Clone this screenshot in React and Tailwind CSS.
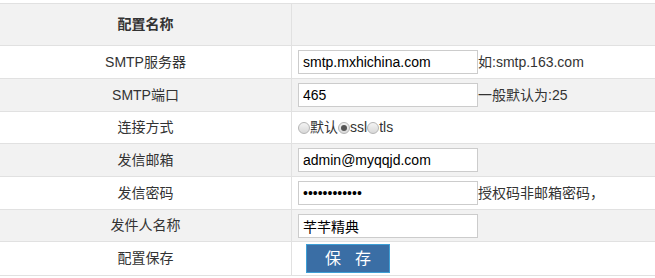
const font = { fontFamily: '"Liberation Sans", "Noto Sans CJK SC", sans-serif' };

function Row({ label, gray, h, children }) {
  return (
    <div className={`flex border-b border-[#e1e1e1] ${h} ${gray ? 'bg-[#f2f2f2]' : 'bg-white'}`}>
      <div className="w-[292px] shrink-0 border-r border-[#e1e1e1] flex items-center justify-center text-[14px] text-[#333]">{label}</div>
      <div className="flex-1 flex items-center pl-[6px] text-[14px] text-[#333]">{children}</div>
    </div>
  );
}

function Field({ value, type = 'text' }) {
  return (
    <input readOnly type={type} value={value}
      className="w-[180px] h-[24px] border border-[#ccc] bg-white px-[4px] text-[14px] text-black outline-none" style={font} />
  );
}

function Radio({ checked }) {
  return (
    <span className="inline-flex w-[12px] h-[12px] rounded-full border border-[#b5b5b5] bg-gradient-to-b from-[#f4f4f4] to-[#d8d8d8] items-center justify-center mt-[1px]">
      {checked && <span className="w-[6px] h-[6px] rounded-full bg-[#555]" />}
    </span>
  );
}

export default function App() {
  return (
    <div className="w-[655px] h-[278px] bg-white pt-[3px]" style={font}>
      <div className="border-t border-[#e1e1e1]">
        <div className="flex h-[42px] border-b border-[#e1e1e1] bg-[#f2f2f2]">
          <div className="w-[292px] shrink-0 border-r border-[#e1e1e1] flex items-center justify-center text-[14px] font-bold text-[#333]">配置名称</div>
          <div className="flex-1" />
        </div>
        <Row label="SMTP服务器" h="h-[33px]">
          <Field value="smtp.mxhichina.com" />
          <span>如:smtp.163.com</span>
        </Row>
        <Row label="SMTP端口" gray h="h-[33px]">
          <Field value="465" />
          <span>一般默认为:25</span>
        </Row>
        <Row label="连接方式" h="h-[32px]">
          <span className="flex items-center">
            <Radio /><span>默认</span><Radio checked /><span>ssl</span><Radio /><span>tls</span>
          </span>
        </Row>
        <Row label="发信邮箱" gray h="h-[33px]">
          <Field value="admin@myqqjd.com" />
        </Row>
        <Row label="发信密码" h="h-[33px]">
          <Field type="password" value="abcdefghijkl" />
          <span>授权码非邮箱密码，</span>
        </Row>
        <Row label="发件人名称" gray h="h-[32px]">
          <Field value="芊芊精典" />
        </Row>
        <Row label="配置保存" h="h-[34px]">
          <button className="ml-[8px] w-[84px] h-[29px] bg-[#3a6ea5] border border-[#3d9fd6] text-white text-[16px] tracking-[14px] pl-[14px]">保存</button>
        </Row>
      </div>
    </div>
  );
}
